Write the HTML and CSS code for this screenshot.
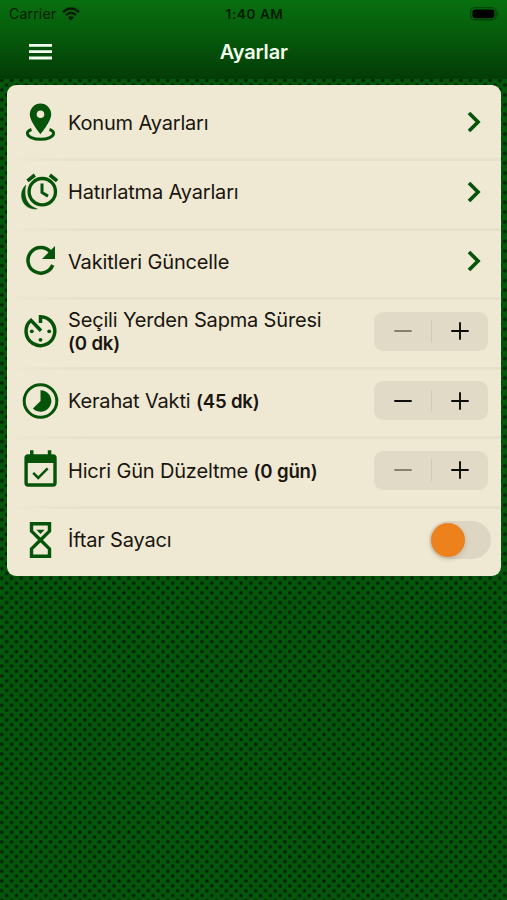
FILE: index.html
```html
<!DOCTYPE html>
<html lang="tr">
<head>
<meta charset="utf-8">
<title>Ayarlar</title>
<link rel="stylesheet" href="styles.css">
</head>
<body>
<header class="header">
  <div class="status">
    <div class="carrier"><span>Carrier</span>
      <svg width="18" height="14" viewBox="0 0 18 14" fill="none" stroke="#001c02" stroke-width="2.5"><path d="M1 5.1Q9-2 17 5.1M3.9 8.1Q9 3.4 14.1 8.1"/><path d="M9 13.5L6 10.5Q9 7.900 12 10.500Z" fill="#001c02" stroke="none"/></svg>
    </div>
    <div class="time">1:40 AM</div>
    <div class="power"><svg width="30" height="14" viewBox="0 0 30 14"><rect x=".7" y=".7" width="25.4" height="12.2" rx="4" fill="none" stroke="#003e04" stroke-width="1.1"/><rect x="2.4" y="2.4" width="22" height="8.8" rx="2.4" fill="#000"/><path d="M27.4 4.8q2 2 0 4z" fill="#003e04"/></svg></div>
  </div>
  <nav class="nav">
    <svg class="menu" width="23" height="16" viewBox="0 0 23 16" fill="#f2fff0"><path d="M0 0h23v2.800H0zM0 6.300h23v2.800H0zM0 12.600h23v2.800H0z"/></svg>
    <h1>Ayarlar</h1>
  </nav>
</header>
<main class="card">
  <div class="row">
    <svg class="icon" viewBox="0 0 40 40"><path fill="#055409" fill-rule="evenodd" d="M20.500 1.500A10.700 10.700 0 0 0 9.800 12.200C9.800 19.500 20.500 32 20.500 32S31.200 19.500 31.200 12.200A10.700 10.700 0 0 0 20.500 1.500Zm0 7a3.800 3.800 0 1 1 0 7.600 3.800 3.800 0 0 1 0-7.600Z"/><path d="M11.500 27.500C8.500 28.500 7.400 30 7.400 31.300c0 3.400 6 6 13.100 6s13.100-2.600 13.100-6c0-1.300-1.100-2.800-4.100-3.800" fill="none" stroke="#055409" stroke-width="2.900"/></svg>
    <div class="label">Konum Ayarları</div>
    <svg class="chevron" viewBox="0 0 14 22"><path d="M2 2l9 9-9 9"/></svg>
  </div>
  <div class="row">
    <svg class="icon line" viewBox="0 0 40 40"><circle cx="22.300" cy="19.700" r="13.200" stroke-width="3.300"/><path d="M22 11.500v9l6 3.600" stroke-width="3"/><path d="M7.500 8.800l7.300-5.800M29.800 3l7.300 5.800" stroke-width="3.600"/><path d="M5.800 13C-3 21.500 2 38.500 17.300 37C8.500 34 3 27 5.800 13Z" fill="#055409" stroke-width=".4"/></svg>
    <div class="label">Hatırlatma Ayarları</div>
    <svg class="chevron" viewBox="0 0 14 22"><path d="M2 2l9 9-9 9"/></svg>
  </div>
  <div class="row">
    <svg class="icon line" viewBox="0 0 40 40"><path d="M30.500 11A12.800 12.800 0 1 0 32.700 24" stroke-width="3.500"/><path d="M35 5v13H22z" fill="#055409" stroke="none"/></svg>
    <div class="label">Vakitleri Güncelle</div>
    <svg class="chevron" viewBox="0 0 14 22"><path d="M2 2l9 9-9 9"/></svg>
  </div>
  <div class="row">
    <svg class="icon line" viewBox="0 0 40 40"><path d="M20.500 12V5.800A14.400 14.400 0 1 1 11 9.300L21 19.800" stroke-width="3.500"/><g fill="#055409" stroke="none"><circle cx="11.800" cy="20.300" r="1.900"/><circle cx="29.200" cy="20.300" r="1.900"/><circle cx="20.500" cy="28.800" r="1.900"/></g></svg>
    <div class="label">Seçili Yerden Sapma Süresi <b>(0 dk)</b></div>
    <div class="stepper"><svg class="off" viewBox="0 0 18 18"><path d="M1 9h16"/></svg><i></i><svg viewBox="0 0 18 18"><path d="M1 9h16M9 1v16"/></svg></div>
  </div>
  <div class="row">
    <svg class="icon line" viewBox="0 0 40 40"><circle cx="20.500" cy="20" r="16.300" stroke-width="3"/><path d="M20.500 9.200A10.800 10.800 0 1 1 12.900 27.600L20.500 20z" fill="#055409" stroke="none"/></svg>
    <div class="label">Kerahat Vakti <b>(45 dk)</b></div>
    <div class="stepper"><svg viewBox="0 0 18 18"><path d="M1 9h16"/></svg><i></i><svg viewBox="0 0 18 18"><path d="M1 9h16M9 1v16"/></svg></div>
  </div>
  <div class="row">
    <svg class="icon line" viewBox="0 0 40 40"><rect x="6.100" y="6" width="28.900" height="29" rx="2" stroke-width="3.400"/><path d="M5 6h31v7H5zM10 .3h3.500v7H10zM27.800 .3h3.500v7h-3.500z" fill="#055409" stroke="none"/><path d="M13.200 22.800l5 5 9.500-9.500" stroke-width="2.600"/></svg>
    <div class="label">Hicri Gün Düzeltme <b>(0 gün)</b></div>
    <div class="stepper"><svg class="off" viewBox="0 0 18 18"><path d="M1 9h16"/></svg><i></i><svg viewBox="0 0 18 18"><path d="M1 9h16M9 1v16"/></svg></div>
  </div>
  <div class="row">
    <svg class="icon line" viewBox="0 0 40 40"><path d="M11.500 3.800h18v7.300l-9 8.900-9-8.900zM11.500 36.200h18v-7.300l-9-8.900-9 8.900z" stroke-width="3.400"/><path d="M16.300 9.800h8.400L20.500 14z" fill="#055409" stroke="none"/></svg>
    <div class="label">İftar Sayacı</div>
    <div class="switch"><span></span></div>
  </div>
</main>
</body>
</html>
```

FILE: styles.css
```css
* { box-sizing: border-box; }
body {
  margin: 0;
  min-height: 900px;
  font-family: Inter, "Liberation Sans", sans-serif;
  background-color: #04560b;
  background-image:
    radial-gradient(circle, #031f09 1px, transparent 2.4px),
    radial-gradient(circle, #031f09 1px, transparent 2.4px);
  background-size: 9.780px 9.780px;
  background-position: 1.800px 2.100px, 6.690px 6.990px;
}
.header {
  height: 79px;
  background: linear-gradient(#08700f, #065c0b 42%, #033c07);
}
.status {
  display: grid;
  grid-template-columns: 1fr auto 1fr;
  align-items: center;
  height: 27px;
  padding: 0 7px 0 9px;
  font-size: 14px;
  color: #001c02;
}
.carrier { display: flex; align-items: center; gap: 5.500px; letter-spacing: .2px; }
.time { font-size: 13.500px; font-weight: 600; letter-spacing: .6px; }
.power { display: flex; justify-content: flex-end; }
.nav {
  display: grid;
  grid-template-columns: 1fr auto 1fr;
  align-items: center;
  height: 50px;
  padding: 0 28px 0 28.500px;
}
.nav h1 {
  margin: 0;
  font-size: 20px;
  font-weight: 600;
  letter-spacing: -.15px;
  color: #f4fff0;
}
.card {
  margin: 6px 6.500px 0 7px;
  padding: 2.500px 0 1.300px;
  border-radius: 9px;
  background: #efe8d3;
}
.row {
  display: flex;
  align-items: center;
  height: 69.600px;
  padding: 0 12.500px 0 13px;
}
.row + .row {
  background: linear-gradient(90deg, transparent, rgba(140, 125, 90, .075) 15%, rgba(140, 125, 90, .075)) 0 1px / 100% 3px no-repeat;
}
.icon { width: 40px; height: 40px; flex: none; }
.line { fill: none; stroke: #055409; }
.label {
  flex: 1;
  max-width: 275px;
  margin-left: 8px;
  padding-top: 2px;
  font-size: 20px;
  line-height: 23px;
  letter-spacing: -.17px;
  color: #19150f;
}
.label b { font-size: 18.600px; font-weight: 600; white-space: nowrap; }
.chevron {
  width: 14px;
  height: 22px;
  margin: 0 7.500px 0 auto;
  fill: none;
  stroke: #055409;
  stroke-width: 3.700;
}
.stepper {
  display: flex;
  align-items: center;
  justify-content: space-between;
  width: 114px;
  height: 39px;
  margin-left: auto;
  padding: 0 19.500px;
  border-radius: 9px;
  background: #e1dac6;
}
.stepper svg { width: 18px; height: 18px; fill: none; stroke: #0d0c0a; stroke-width: 1.900; stroke-linecap: round; }
.stepper .off { stroke: #88816f; }
.stepper i { width: 1px; height: 22px; background: #d0c9b6; }
.switch {
  width: 62px;
  height: 38px;
  margin: 0 -2.500px 0 auto;
  padding: 2px;
  border-radius: 19px;
  background: #dcd6c3;
}
.switch span {
  display: block;
  width: 34px;
  height: 34px;
  border-radius: 50%;
  background: #ed811c;
  box-shadow: 0 2px 5px rgba(80, 60, 20, .22);
}
```
